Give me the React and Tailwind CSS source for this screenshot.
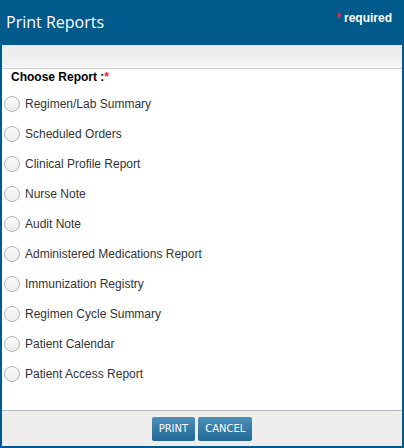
import { useState } from 'react'

const reports = [
  'Regimen/Lab Summary',
  'Scheduled Orders',
  'Clinical Profile Report',
  'Nurse Note',
  'Audit Note',
  'Administered Medications Report',
  'Immunization Registry',
  'Regimen Cycle Summary',
  'Patient Calendar',
  'Patient Access Report',
]

export default function App() {
  const [picked, setPicked] = useState(null)

  return (
    <div className="w-[404px] h-[448px] flex flex-col bg-[#005a8c] font-['Liberation_Sans',Arial,sans-serif]">
      <div className="h-[45px] shrink-0 flex items-start justify-between pl-[6px] pr-[12px]">
        <h1 className="mt-[12px] text-[16px] text-white font-['Open_Sans',sans-serif] leading-[20px]">Print Reports</h1>
        <span className="mt-[11px] text-[12px] font-bold text-white leading-[14px]">
          <span className="text-[#e8263a]">*</span> required
        </span>
      </div>
      <div className="flex-1 flex flex-col mx-[2px] mb-[2px] bg-white">
        <div className="h-[24px] shrink-0 bg-gradient-to-b from-[#ebebeb] to-[#f5f5f5] border-b border-[#cfcfcf]" />
        <div className="flex-1">
          <div className="pl-[9px] pt-[1px] text-[12px] font-bold text-black leading-[14px]">
            Choose Report :<span className="text-[#e8263a]">*</span>
          </div>
          <div className="flex flex-col mt-[5px]">
            {reports.map((r, i) => (
              <label key={r} className="h-[30px] flex items-center gap-[5px] pl-[2px] cursor-pointer" onClick={() => setPicked(i)}>
                <span className="w-[16px] h-[16px] rounded-full border border-[#b5b5b5] bg-gradient-to-b from-[#fafafa] to-[#ececec] flex items-center justify-center">
                  {picked === i && <span className="w-[8px] h-[8px] rounded-full bg-[#333]" />}
                </span>
                <span className="text-[12px] text-[#333] leading-[14px]">{r}</span>
              </label>
            ))}
          </div>
        </div>
        <div className="h-[36px] shrink-0 bg-[#f0eeed] border-t border-[#a9bccb] flex items-start justify-center gap-[3px] pt-[6px]">
          <button className="h-[24px] px-[7px] rounded-[2px] bg-gradient-to-b from-[#4d8fb6] to-[#1e6897] text-white text-[10px] font-['DejaVu_Sans',Verdana,sans-serif] leading-[24px]">PRINT</button>
          <button className="h-[24px] px-[7px] rounded-[2px] bg-gradient-to-b from-[#4d8fb6] to-[#1e6897] text-white text-[10px] font-['DejaVu_Sans',Verdana,sans-serif] leading-[24px]">CANCEL</button>
        </div>
      </div>
    </div>
  )
}
